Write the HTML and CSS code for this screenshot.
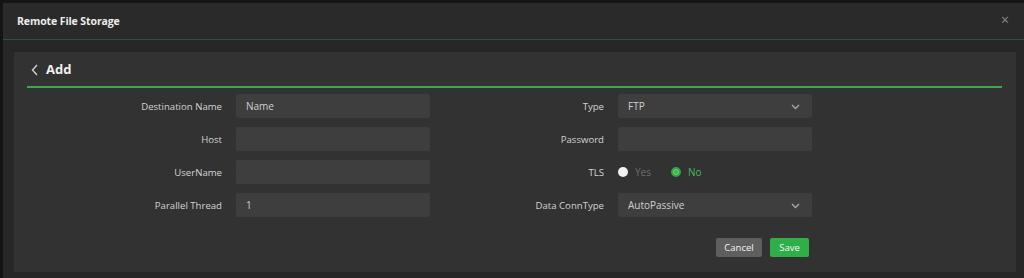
FILE: index.html
```html
<!DOCTYPE html>
<html>
<head>
<meta charset="utf-8">
<link rel="stylesheet" href="styles.css">
</head>
<body>
<div class="modal">
  <div class="modal-header">
    <span class="modal-title">Remote File Storage</span>
    <span class="close">&times;</span>
  </div>
  <div class="modal-body">
    <div class="panel">
      <div class="panel-head">
        <svg class="back" width="8" height="12" viewBox="0 0 8 12"><path d="M6 1 L1.5 6 L6 11" fill="none" stroke="#d0d0d0" stroke-width="1.4"/></svg>
        <span class="panel-title">Add</span>
      </div>
      <div class="form">
        <div class="group">
          <label class="lbl">Destination Name</label>
          <div class="input"><span class="val">Name</span></div>
          <label class="lbl">Host</label>
          <div class="input"></div>
          <label class="lbl">UserName</label>
          <div class="input"></div>
          <label class="lbl">Parallel Thread</label>
          <div class="input"><span class="val">1</span></div>
        </div>
        <div class="group">
          <label class="lbl">Type</label>
          <div class="input select"><span class="val">FTP</span><svg class="chev" width="9" height="6" viewBox="0 0 9 6"><path d="M1 1 L4.5 4.5 L8 1" fill="none" stroke="#aaa" stroke-width="1.3"/></svg></div>
          <label class="lbl">Password</label>
          <div class="input"></div>
          <label class="lbl">TLS</label>
          <div class="radios">
            <span class="radio off"></span><span class="rtext off">Yes</span>
            <span class="radio on"></span><span class="rtext on">No</span>
          </div>
          <label class="lbl">Data ConnType</label>
          <div class="input select"><span class="val">AutoPassive</span><svg class="chev" width="9" height="6" viewBox="0 0 9 6"><path d="M1 1 L4.5 4.5 L8 1" fill="none" stroke="#aaa" stroke-width="1.3"/></svg></div>
        </div>
      </div>
      <div class="actions">
        <button class="btn cancel">Cancel</button>
        <button class="btn save">Save</button>
      </div>
    </div>
  </div>
</div>
</body>
</html>
```
FILE: styles.css
```css
html, body {
  margin: 0;
  padding: 0;
  background: #141414;
  width: 1024px;
  height: 278px;
  overflow: hidden;
  font-family: "Open Sans", "Noto Sans", sans-serif;
}
.modal {
  margin: 3px 0 0 3px;
  height: 275px;
  background: #272727;
  display: flex;
  flex-direction: column;
}
.modal-header {
  height: 37px;
  box-sizing: border-box;
  background: #2a2a2a;
  border-bottom: 1px solid #2f5136;
  display: flex;
  align-items: center;
  justify-content: space-between;
  padding: 0 15px 0 14px;
}
.modal-title {
  color: #ececec;
  font-size: 10.5px;
  font-weight: 700;
  letter-spacing: -0.1px;
}
.close {
  color: #8a8a8a;
  font-size: 14px;
  line-height: 1;
  margin-top: -2px;
}
.modal-body {
  padding: 12px 8px 0 11px;
  flex: 1;
}
.panel {
  background: #323232;
  height: 220px;
  padding: 0 14px 0 13px;
  box-sizing: border-box;
}
.panel-head {
  height: 36px;
  border-bottom: 2px solid #3fa650;
  box-sizing: border-box;
  display: flex;
  align-items: center;
  padding: 0 0 0 4px;
}
.back {
  margin-right: 7px;
  margin-top: 1px;
}
.panel-title {
  color: #f0f0f0;
  font-size: 13px;
  font-weight: 700;
}
.form {
  display: grid;
  grid-template-columns: 330px 330px;
  column-gap: 52px;
  margin: 6px 0 0 73px;
}
.group {
  display: grid;
  grid-template-columns: 122px 194px;
  column-gap: 14px;
  row-gap: 9px;
  grid-auto-rows: 24px;
}
.lbl {
  color: #d2d2d2;
  font-size: 9.6px;
  text-align: right;
  display: flex;
  align-items: center;
  justify-content: flex-end;
}
.input {
  background: #3e3e3e;
  border-radius: 2px;
  display: flex;
  align-items: center;
  justify-content: space-between;
  padding: 0 12px 0 10px;
  box-sizing: border-box;
}
.val {
  color: #d0d0d0;
  font-size: 10px;
}
.chev {
  margin-top: 1px;
}
.radios {
  display: flex;
  align-items: center;
  padding-left: 0;
}
.radio {
  width: 10px;
  height: 10px;
  border-radius: 50%;
  box-sizing: border-box;
}
.radio.off {
  background: #f2f2f2;
}
.radio.on {
  background: #3fb24f;
  border: 2.5px solid #35a045;
  box-shadow: inset 0 0 0 1px #6fd57c;
  margin-left: 20px;
}
.rtext {
  font-size: 10px;
  margin-left: 7px;
}
.rtext.off {
  color: #6e6e6e;
}
.rtext.on {
  color: #47b957;
}
.actions {
  display: flex;
  justify-content: flex-end;
  gap: 8px;
  margin: 21px 193px 0 0;
}
.btn {
  height: 19px;
  border: none;
  border-radius: 2px;
  font-family: "Open Sans", "Noto Sans", sans-serif;
  font-size: 9.5px;
  color: #f4f4f4;
  padding: 0;
}
.cancel {
  background: #5f5f5f;
  width: 46px;
}
.save {
  background: #2fae49;
  width: 39px;
}
```
